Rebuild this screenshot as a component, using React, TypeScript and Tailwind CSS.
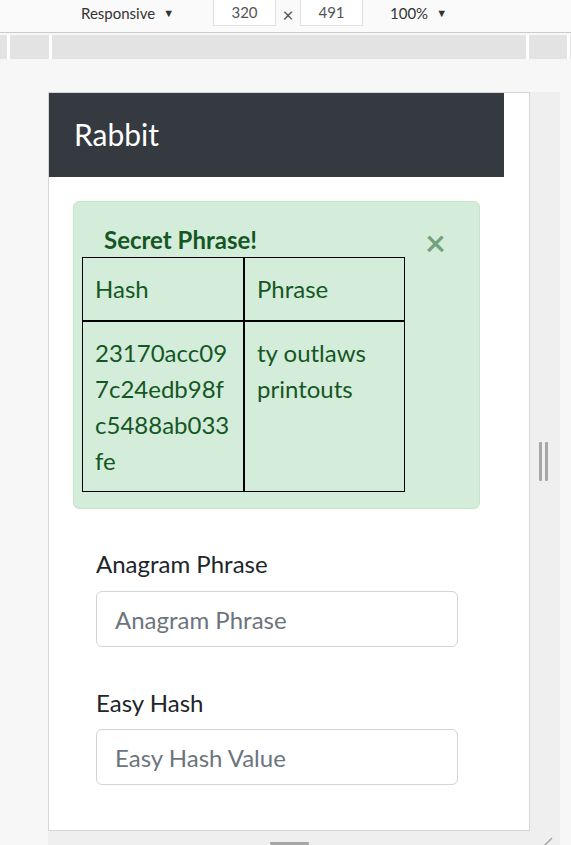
export default function App() {
  return (
    <div className="w-[571px] h-[845px] overflow-hidden bg-[#f7f7f7] font-['Lato',sans-serif] relative">
      {/* devtools toolbar */}
      <div className="h-[33px] bg-[#fafafa] border-b border-[#cbcbcb] flex items-start text-[15px] text-[#333]">
        <div className="ml-[81px] w-[132px] h-[26px] flex items-center">
          <span>Responsive</span>
          <span className="ml-[8px] text-[11px]">▼</span>
        </div>
        <div className="w-[63px] h-[26px] bg-white border border-t-0 border-[#e2e2e2] flex items-center justify-center text-[#555]">320</div>
        <div className="w-[24px] h-[26px] flex items-center justify-center pt-[5px] text-[#555] text-[19px]">×</div>
        <div className="w-[63px] h-[26px] bg-white border border-t-0 border-[#e2e2e2] flex items-center justify-center text-[#555]">491</div>
        <div className="ml-[27px] h-[26px] flex items-center">
          <span>100%</span>
          <span className="ml-[8px] text-[11px]">▼</span>
        </div>
      </div>
      {/* ruler */}
      <div className="mt-[2px] h-[24px] bg-[#e3e3e3] flex">
        <div className="w-[7px]" />
        <div className="w-[3px] bg-white" />
        <div className="w-[39px]" />
        <div className="w-[3px] bg-white" />
        <div className="w-[474px]" />
        <div className="w-[3px] bg-white" />
        <div className="w-[38px]" />
        <div className="w-[3px] bg-white" />
      </div>
      {/* device area */}
      <div className="ml-[48px] mt-[33px] flex flex-col">
        <div className="flex">
          <div className="w-[482px] h-[739px] border border-[#d6d6d6] bg-white flex flex-col">
            <div className="w-[455px] h-[84px] bg-[#343a40] flex items-center pl-[25px] pb-[2px]">
              <span className="text-white text-[30px] leading-[36px]">Rabbit</span>
            </div>
            {/* alert */}
            <div className="ml-[24px] mt-[24px] w-[407px] bg-[#d4edda] border border-[#c3e6cb] rounded-[6px] text-[#155724] relative pl-[8px] pt-[24px] pb-[16px]">
              <div className="ml-[22px] text-[24px] leading-[28px] font-bold h-[31px]">Secret Phrase!</div>
              <div className="absolute left-[351px] top-[20px] text-[36px] leading-[40px] font-bold text-[#155724]/50">×</div>
              <table className="border-separate border-spacing-0 w-[323px] text-[24px] leading-[36px]">
                <thead>
                  <tr>
                    <th className="w-[162px] border border-black px-[12px] py-[13px] text-left font-normal">Hash</th>
                    <th className="border border-black px-[12px] py-[13px] text-left font-normal">Phrase</th>
                  </tr>
                </thead>
                <tbody>
                  <tr>
                    <td className="border border-black px-[12px] pt-[13px] pb-[12px] align-top">
                      23170acc09<br />7c24edb98f<br />c5488ab033<br />fe
                    </td>
                    <td className="border border-black px-[12px] pt-[13px] pb-[12px] align-top">
                      ty outlaws<br />printouts
                    </td>
                  </tr>
                </tbody>
              </table>
            </div>
            {/* form */}
            <div className="ml-[47px] mt-[37px] flex flex-col text-[24px] text-[#212529]">
              <label className="leading-[36px] mb-[9px]">Anagram Phrase</label>
              <input
                className="w-[362px] h-[56px] border border-[#ced4da] rounded-[6px] px-[18px] text-[24px] placeholder:text-[#6c757d] outline-none"
                placeholder="Anagram Phrase"
              />
              <label className="leading-[36px] mb-[8px] mt-[38px]">Easy Hash</label>
              <input
                className="w-[362px] h-[56px] border border-[#ced4da] rounded-[6px] px-[18px] text-[24px] placeholder:text-[#6c757d] outline-none"
                placeholder="Easy Hash Value"
              />
            </div>
          </div>
          {/* right resize strip */}
          <div className="w-[30px] h-[739px] bg-[#efefef] flex items-center">
            <div className="ml-[9px] flex gap-[3px]">
              <div className="w-[3px] h-[39px] bg-[#a6a6a6] rounded-[1px]" />
              <div className="w-[3px] h-[39px] bg-[#a6a6a6] rounded-[1px]" />
            </div>
          </div>
        </div>
        {/* bottom resize strip */}
        <div className="w-[512px] h-[20px] bg-[#efefef] relative">
          <div className="absolute left-[222px] top-[11px] w-[39px] h-[3px] bg-[#a6a6a6] rounded-[1px]" />
          <svg className="absolute left-[492px] top-[4px]" width="14" height="14" viewBox="0 0 14 14">
            <line x1="2" y1="13" x2="12" y2="3" stroke="#a6a6a6" strokeWidth="1.5" />
          </svg>
        </div>
      </div>
    </div>
  );
}
